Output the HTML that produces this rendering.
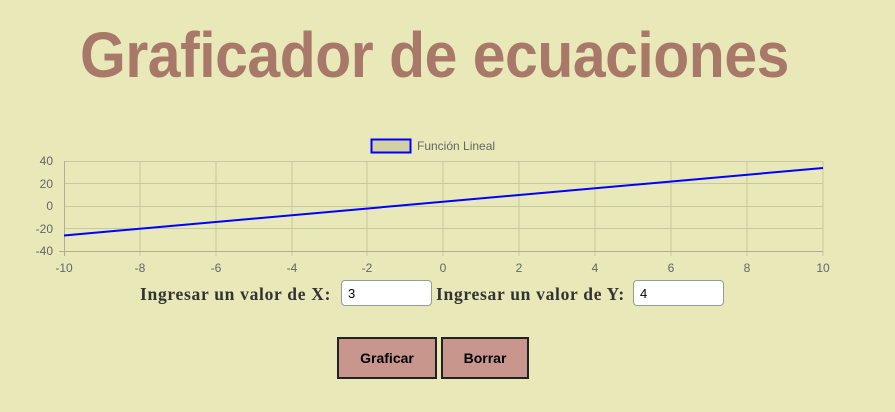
<!DOCTYPE html>
<html><head><meta charset="utf-8"><style>
body{margin:0;width:895px;height:412px;background:#e8e8b8;position:relative;overflow:hidden;font-family:"Liberation Sans",sans-serif}
.t{position:absolute;left:80px;top:18px;font-size:64px;font-weight:bold;color:#a87868;white-space:nowrap;transform-origin:0 0;transform:scaleX(0.92);letter-spacing:-0.5px}
.l{position:absolute;top:284px;font-family:"Liberation Serif",serif;font-weight:bold;font-size:17.5px;letter-spacing:0.7px;color:#333}
.in{position:absolute;top:280px;width:91px;height:26px;background:#fff;border:1px solid #999;border-radius:4px;box-sizing:border-box;font-size:13px;padding:5px 0 0 6px;color:#000}
.b{position:absolute;top:337px;height:42px;background:#c8968c;border:2px solid #222;box-sizing:border-box;font-weight:bold;font-size:14px;display:flex;align-items:center;justify-content:center}
</style></head><body>
<div class="t">Graficador de ecuaciones</div>
<svg style="position:absolute;left:0;top:0" width="895" height="280" font-family="Liberation Sans, sans-serif" font-size="12" fill="#666">
<rect x="371.5" y="139.5" width="39" height="13" fill="#d3d0a4" stroke="#00f" stroke-width="2"/>
<text x="417" y="150">Función Lineal</text>
<g stroke="#c8c8a0" stroke-width="1">
<line x1="64" y1="161.5" x2="823" y2="161.5"/><line x1="64" y1="183.5" x2="823" y2="183.5"/><line x1="64" y1="206.5" x2="823" y2="206.5"/><line x1="64" y1="228.5" x2="823" y2="228.5"/>
<line x1="140" y1="161" x2="140" y2="256"/><line x1="216" y1="161" x2="216" y2="256"/><line x1="292" y1="161" x2="292" y2="256"/><line x1="367" y1="161" x2="367" y2="256"/><line x1="443" y1="161" x2="443" y2="256"/><line x1="519" y1="161" x2="519" y2="256"/><line x1="595" y1="161" x2="595" y2="256"/><line x1="671" y1="161" x2="671" y2="256"/><line x1="747" y1="161" x2="747" y2="256"/><line x1="823" y1="161" x2="823" y2="256"/>
</g>
<g stroke="#b0b090"><line x1="64.5" y1="161" x2="64.5" y2="256"/><line x1="59" y1="251.5" x2="823" y2="251.5"/></g>
<line x1="64" y1="235.5" x2="823" y2="168" stroke="#00f" stroke-width="2"/>
<g text-anchor="end"><text x="53" y="165">40</text><text x="53" y="188">20</text><text x="53" y="210">0</text><text x="53" y="233">-20</text><text x="53" y="255">-40</text></g>
<g text-anchor="middle"><text x="64" y="272">-10</text><text x="140" y="272">-8</text><text x="216" y="272">-6</text><text x="292" y="272">-4</text><text x="367" y="272">-2</text><text x="443" y="272">0</text><text x="519" y="272">2</text><text x="595" y="272">4</text><text x="671" y="272">6</text><text x="747" y="272">8</text><text x="823" y="272">10</text></g>
</svg>
<div class="l" style="left:140px">Ingresar un valor de X:</div>
<div class="in" style="left:341px">3</div>
<div class="l" style="left:436px">Ingresar un valor de Y:</div>
<div class="in" style="left:633px">4</div>
<div class="b" style="left:337px;width:100px">Graficar</div>
<div class="b" style="left:441px;width:88px">Borrar</div>
</body></html>
